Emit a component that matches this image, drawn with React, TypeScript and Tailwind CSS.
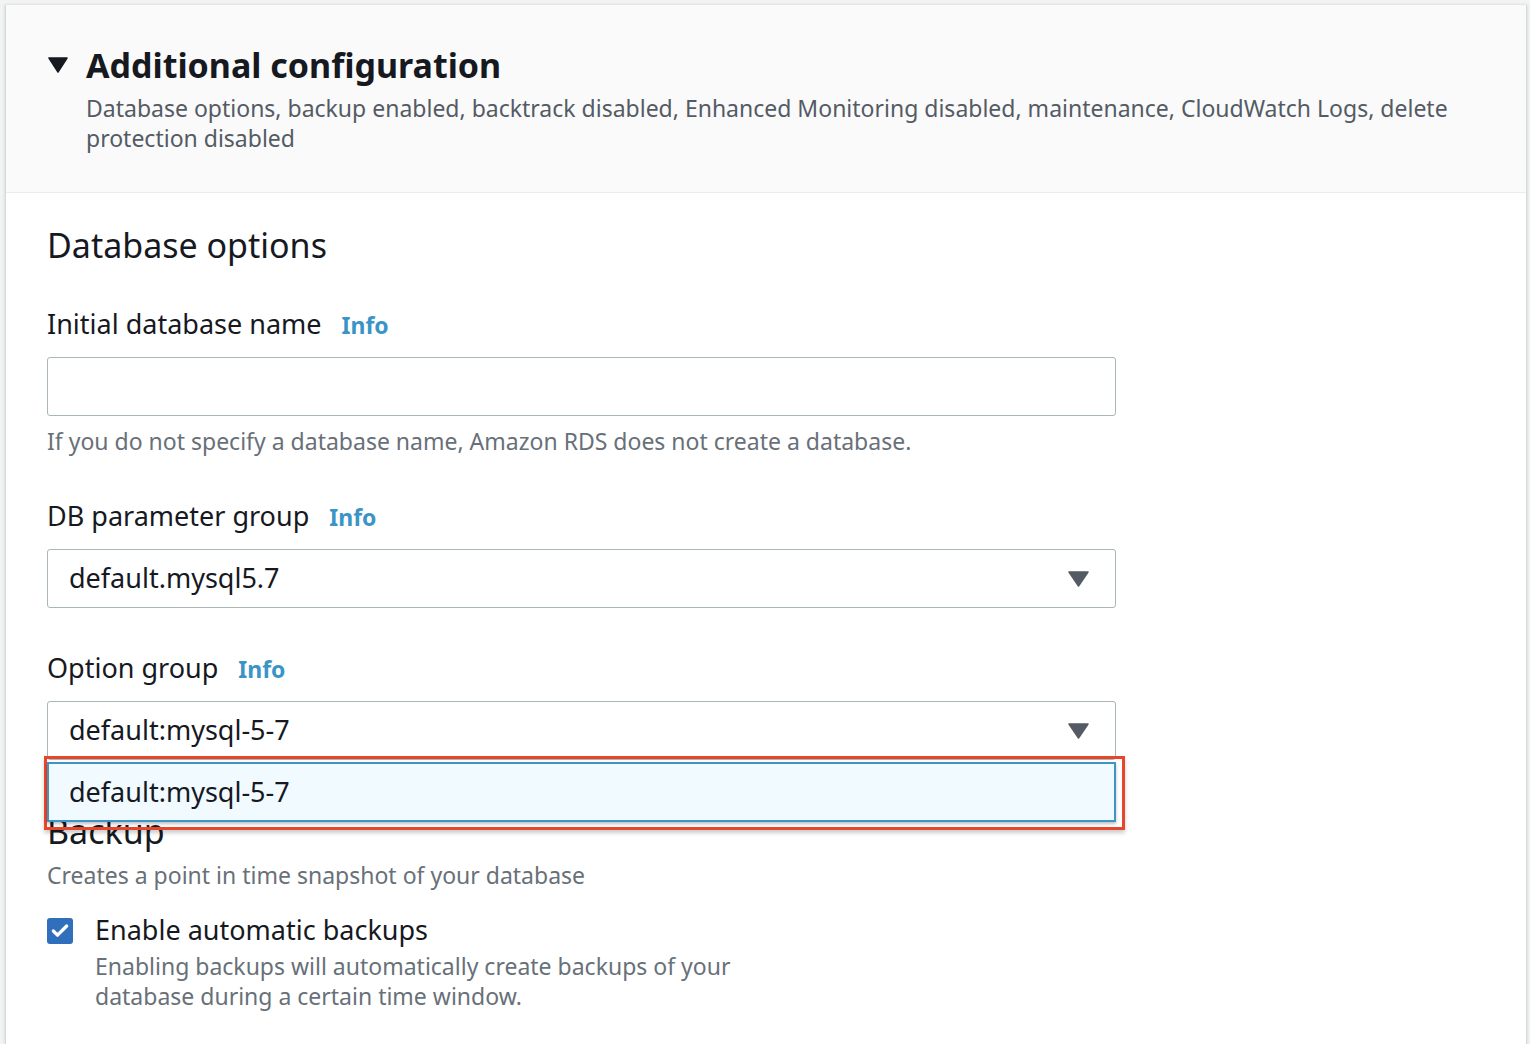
import { Check } from "lucide-react";

const font = { fontFamily: "'Noto Sans', 'Open Sans', sans-serif" };

function FieldLabel({ label }: { label: string }) {
  return (
    <div className="flex items-baseline gap-[20px] text-[27px] leading-[36px] text-[#16191f]">
      <span>{label}</span>
      <span className="text-[23px] font-bold text-[#3a95c6]">Info</span>
    </div>
  );
}

function SelectBox({ value }: { value: string }) {
  return (
    <div className="flex h-[59px] w-[1069px] items-center justify-between rounded-[3px] border-[1.5px] border-[#aab7b8] bg-white pl-[21px] pr-[26px] text-[27px] text-[#16191f]">
      <span>{value}</span>
      <svg width="21" height="16" viewBox="0 0 21 16">
        <path d="M1 1 H20 L10.5 15 Z" fill="#545b64" stroke="#545b64" strokeWidth="1.5" strokeLinejoin="round" />
      </svg>
    </div>
  );
}

export default function App() {
  return (
    <div className="min-h-[1044px] w-[1530px] overflow-hidden bg-[#f2f3f3] pt-[5px] pl-[5px] pr-[3px]" style={font}>
      <div className="h-[1039px] border-l-[1.5px] border-r-[1.5px] border-[#d5dbdb] bg-white shadow-[0_0_3px_rgba(0,0,0,0.15)]">
        {/* Header */}
        <div className="h-[188px] border-b-[1.5px] border-[#eaeded] bg-[#fafafa] pl-[42px] pt-[38px]">
          <div className="flex items-center gap-[18px]">
            <svg width="20" height="16" viewBox="0 0 20 16">
              <path d="M1 1 H19 L10 15 Z" fill="#16191f" stroke="#16191f" strokeWidth="1.5" strokeLinejoin="round" />
            </svg>
            <h2 className="text-[34px] font-bold leading-[44px] text-[#16191f]">Additional configuration</h2>
          </div>
          <p className="mt-[6px] pl-[38px] text-[23px] leading-[30px] text-[#545b64]">
            Database options, backup enabled, backtrack disabled, Enhanced Monitoring disabled, maintenance, CloudWatch Logs, delete
            <br />
            protection disabled
          </p>
        </div>

        {/* Body */}
        <div className="pl-[41px] pt-[30px]">
          <h3 className="text-[34px] leading-[44px] text-[#16191f]">Database options</h3>

          <div className="mt-[39px]">
            <FieldLabel label="Initial database name" />
            <div className="mt-[14px] h-[59px] w-[1069px] rounded-[3px] border-[1.5px] border-[#aab7b8] bg-white" />
            <p className="mt-[10px] text-[23px] leading-[30px] text-[#687078]">
              If you do not specify a database name, Amazon RDS does not create a database.
            </p>
          </div>

          <div className="mt-[42px]">
            <FieldLabel label="DB parameter group" />
            <div className="mt-[14px]">
              <SelectBox value="default.mysql5.7" />
            </div>
          </div>

          <div className="mt-[42px]">
            <FieldLabel label="Option group" />
            <div className="relative mt-[14px]">
              <SelectBox value="default:mysql-5-7" />
              {/* open dropdown option, outlined by a red annotation */}
              <div className="absolute left-[-3px] top-[55px] z-10 w-[1081px] border-[3px] border-[#e8462a] pt-[3px] pb-[5px] shadow-[0_3px_4px_rgba(0,0,0,0.2)]">
                <div className="flex h-[60px] w-[1069px] items-center border-[2px] border-[#3e95c5] bg-[#f1faff] pl-[20px] text-[27px] text-[#16191f] shadow-[0_2px_3px_rgba(0,0,0,0.25)]">
                  default:mysql-5-7
                </div>
              </div>
            </div>
          </div>

          <div className="mt-[49px]">
            <h3 className="text-[34px] leading-[44px] text-[#16191f]">Backup</h3>
            <p className="mt-[7px] text-[23px] leading-[30px] text-[#687078]">Creates a point in time snapshot of your database</p>
          </div>

          <div className="mt-[22px] flex gap-[22px]">
            <div className="mt-[6px] flex h-[26px] w-[26px] items-center justify-center rounded-[3px] bg-[#2f6fbb]">
              <Check size={20} strokeWidth={4} color="white" />
            </div>
            <div>
              <div className="text-[27px] leading-[36px] text-[#16191f]">Enable automatic backups</div>
              <p className="mt-[3px] text-[23px] leading-[30px] text-[#687078]">
                Enabling backups will automatically create backups of your
                <br />
                database during a certain time window.
              </p>
            </div>
          </div>
        </div>
      </div>
    </div>
  );
}
